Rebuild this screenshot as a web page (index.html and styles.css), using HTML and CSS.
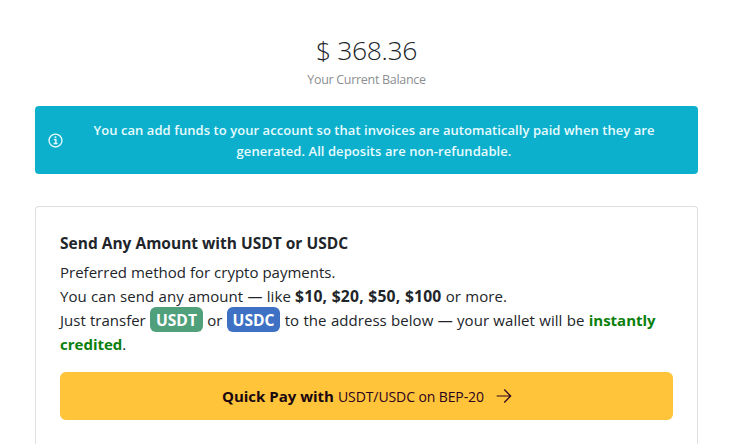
FILE: index.html
```html
<!DOCTYPE html>
<html lang="en">
<head>
<meta charset="utf-8">
<title>Add Funds</title>
<link rel="stylesheet" href="styles.css">
</head>
<body>
<main class="page">
  <header class="balance">
    <div class="balance-amount">$ 368.36</div>
    <div class="balance-label">Your Current Balance</div>
  </header>
  <div class="alert">
    <svg class="alert-icon" viewBox="0 0 16 16" fill="none" stroke="currentColor">
      <circle cx="8" cy="8" r="6.9" stroke-width="1.4"/>
      <path d="M6.2 7.1H8.4V11M6 11.2H10.2" stroke-width="1.5"/>
      <circle cx="8" cy="4.6" r="1.1" fill="currentColor" stroke="none"/>
    </svg>
    <p class="alert-text">You can add funds to your account so that invoices are automatically paid when they are<br>generated. All deposits are non-refundable.</p>
  </div>
  <section class="card">
    <h2 class="card-title">Send Any Amount with USDT or USDC</h2>
    <p class="card-text">
      <span class="line preferred">Preferred method for crypto payments.</span>
      <span class="line amounts">You can send any amount — like <b class="values">$10, $20, $50, $100</b> or more.</span>
      <span class="line transfer">Just transfer <b class="coin usdt">USDT</b> or <b class="coin usdc">USDC</b> <span class="address">to the address below — your wallet will be</span> <b class="credit">instantly</b></span>
      <span class="line"><b class="credit">credited</b>.</span>
    </p>
    <button class="pay" type="button">
      <b class="pay-lead">Quick Pay with</b>
      <span class="pay-network">USDT/USDC on BEP-20</span>
      <svg class="pay-arrow" viewBox="0 0 16 16" fill="none" stroke="currentColor" stroke-width="1.2"><path d="M.7 8H14.6M8.3 1.5 14.7 8 8.3 14.5"/></svg>
    </button>
  </section>
</main>
</body>
</html>
```
FILE: styles.css
```css
* { box-sizing: border-box; }
body {
  margin: 0;
  background: #fff;
  color: #212529;
  font-family: "Open Sans", "Noto Sans", sans-serif;
}
.page { padding: 31px 36px 0 35px; }
.balance { text-align: center; height: 75px; }
.balance-amount { font-size: 26.5px; line-height: 39px; font-weight: 300; letter-spacing: -0.4px; }
.balance-label { font-size: 12.5px; line-height: 19px; color: #8c8f92; letter-spacing: -0.3px; }
.alert {
  display: flex;
  align-items: center;
  height: 68px;
  padding: 1px 13px 0;
  border-radius: 4px;
  background: #0cb0cc;
  color: #e8fbff;
}
.alert-icon { flex: none; width: 15px; height: 15px; margin-top: -1px; }
.alert-text {
  flex: 1;
  margin: 1px 0 0;
  text-align: center;
  white-space: nowrap;
  font-size: 13px;
  font-weight: 600;
  line-height: 21px;
  letter-spacing: 0.06px;
}
.card {
  height: 238px;
  margin-top: 32px;
  padding: 24px 24px 0;
  border: 1px solid #dedfe1;
  border-bottom: 0;
  border-radius: 4px 4px 0 0;
}
.card-title { margin: 0; font-size: 15.5px; line-height: 25px; font-weight: 700; }
.card-text { margin: 4px 0 0; font-size: 15px; line-height: 24px; }
.line { display: block; height: 24px; white-space: nowrap; }
.preferred { letter-spacing: 0.01px; }
.amounts { letter-spacing: 0.06px; word-spacing: 0.25px; }
.values { font-size: 15.7px; line-height: 20px; letter-spacing: 0.18px; }
.transfer { word-spacing: 0.35px; }
.coin {
  display: inline-block;
  height: 25px;
  margin: -1px 0 0;
  padding: 1px 6px 0;
  border-radius: 6px;
  vertical-align: top;
  color: #fff;
  font-size: 15.6px;
}
.coin.usdt { background: #50a07c; }
.coin.usdc { background: #3e70c4; }
.address { letter-spacing: 0.05px; }
.credit { color: #0b800b; }
.pay {
  display: flex;
  align-items: center;
  width: 100%;
  height: 48px;
  margin-top: 16px;
  padding: 0 0 0 162px;
  border: 0;
  border-radius: 6px;
  background: #ffc439;
  color: #2c0020;
  font: inherit;
  white-space: nowrap;
}
.pay-lead { width: 116px; text-align: left; font-size: 15px; color: #1a0710; }
.pay-network { width: 158px; text-align: left; font-size: 14px; letter-spacing: -0.1px; }
.pay-arrow { width: 16px; height: 16px; }
```
